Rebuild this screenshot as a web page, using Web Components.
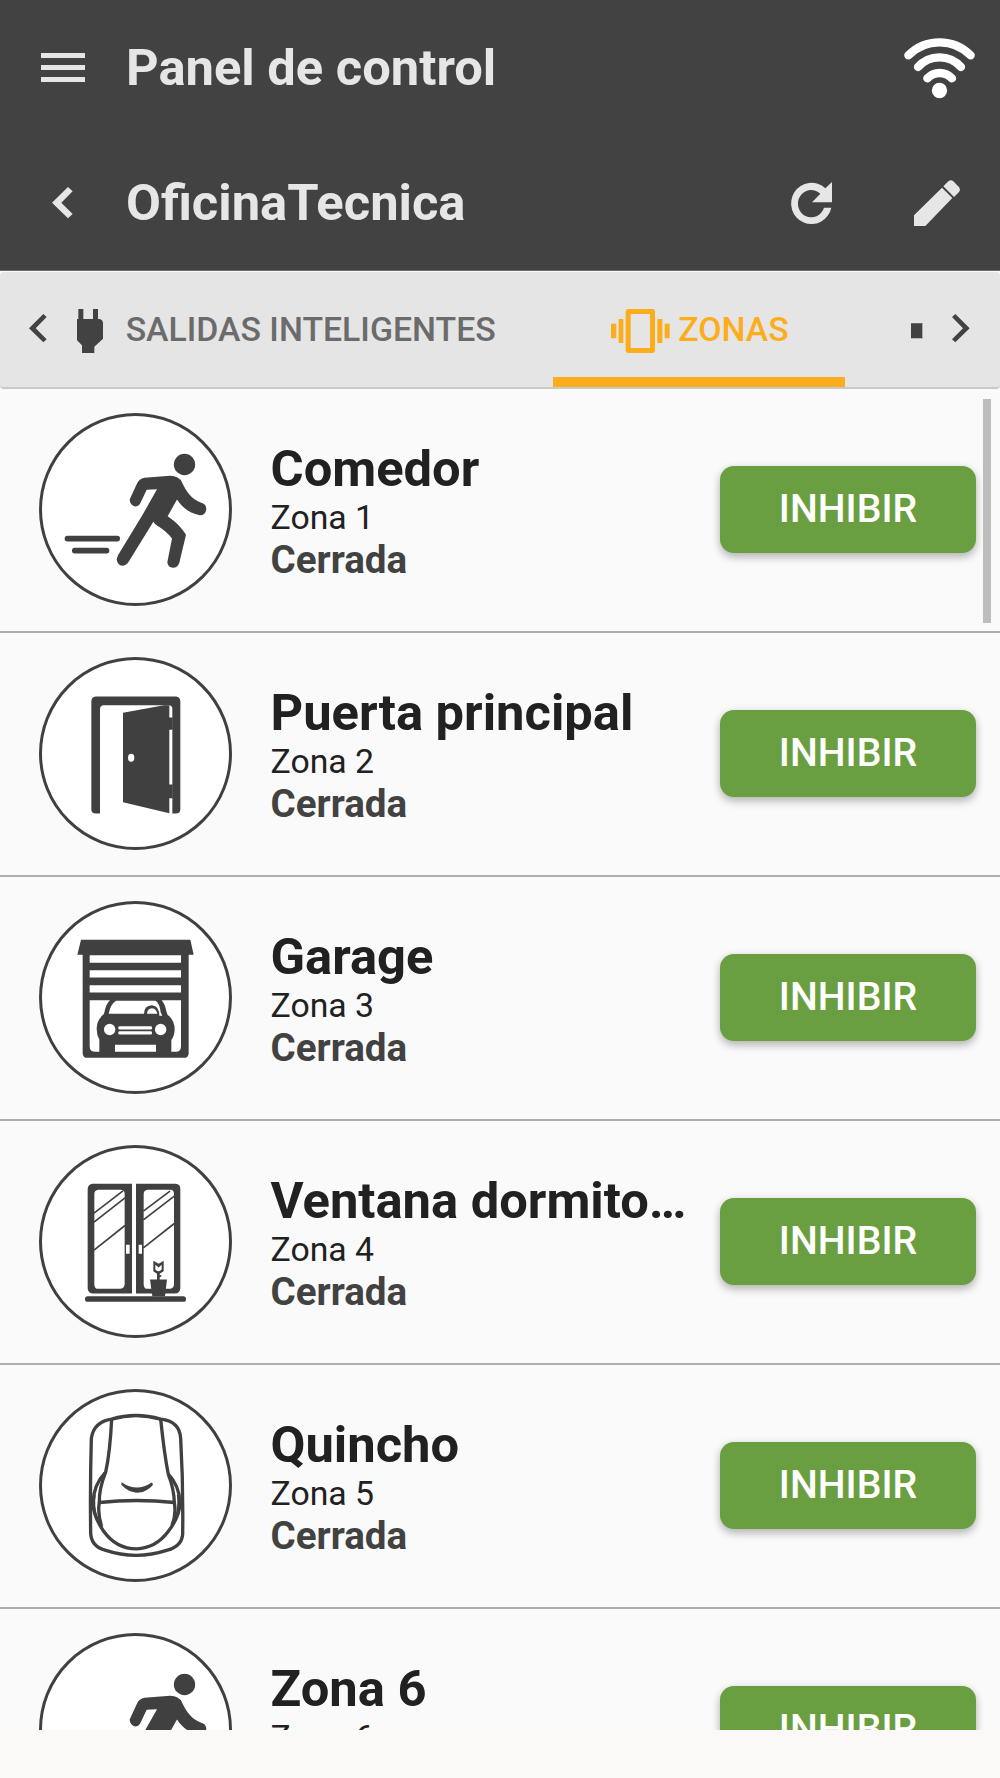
<!DOCTYPE html>
<html lang="es">
<head>
<meta charset="utf-8">
<title>Panel de control</title>
<style>
html,body{margin:0;padding:0}
body{width:1000px;height:1778px;overflow:hidden;background:#faf9f8;font-family:Roboto,"Liberation Sans",sans-serif}
</style>
</head>
<body>
<zone-app></zone-app>
<script>
const define = (name, html) => {
  const t = document.createElement('template');
  t.innerHTML = html;
  customElements.define(name, class extends HTMLElement {
    constructor() {
      super();
      this.attachShadow({mode: 'open'}).appendChild(t.content.cloneNode(true));
    }
  });
};

// Icon drawings: [viewBox, markup]. Three units make one pixel.
const runner = `
  <circle cx="463.500" cy="194" r="32"/>
  <path d="M343 234L420 228Q447 228 456 248C470 278 485 297 512 308Q529 312 529 328Q526 347 509 346C478 340 456 322 441 299L413 349Q450 374 468 405L448 489Q443 504 429 504Q413 502 412 487L426 416Q408 393 382 378Q374 373 370 366L296 486Q288 498 277 498Q262 495 260 478L264 466L336 348L381 268L350 270L333 306Q328 320 315 320Q300 316 299 299L320 253Q328 236 343 234Z"/>
  <rect x="104" y="408" width="166" height="17" rx="8"/><rect x="126" y="444" width="112" height="17" rx="8"/>`;
const ICONS = {
  menu: ['123 159 132 87', '<path d="M123 159h132v15H123zM123 195h132v15H123zM123 231h132v15H123z"/>'],
  back: ['156 562 62 94', '<path d="M204 562L156 609L204 656L218 643L184 609L218 575Z"/>'],
  wifi: ['492 113 213 181', '<g fill="none" stroke="currentColor" stroke-width="25" stroke-linecap="round"><path d="M505 165A131.600 131.600 0 0 1 692 165M534 200A86 86 0 0 1 663 200M562 234A50.800 50.800 0 0 1 636 234"/></g><circle cx="598.500" cy="270.500" r="23"/>'],
  refresh: ['153 544 123 127', '<path d="M256 563L276 544V605H216L241 579A40 41 0 1 0 252 621H274A61 62 0 1 1 256 563Z"/>'],
  edit: ['522 540 138 138', '<path d="M606 563L637 594L556 678H522V646ZM610 559L625 544Q632 537 640 544L656 560Q663 568 657 576L642 591Z"/>'],
  prev: ['88 163 53 85', '<path d="M131 163L88 205.500L131 248L141 239L108 205.500L141 172Z"/>'],
  next: ['1360 163 53 85', '<path d="M1370 163L1413 205.500L1370 248L1360 239L1393 205.500L1360 172Z"/>'],
  plug: ['231 147 78 132', '<path d="M235 147h15v30h29v-30h15v30h4Q309 179 309 190V236L283 260V279H246V256L231 241V177h4z"/>'],
  zones: ['334 147 176 132', '<path fill-rule="evenodd" d="M386 147H458Q466 147 466 155V270Q466 279 458 279H386Q378 279 378 270V155Q378 147 386 147ZM393 162V264H451V162ZM334 191h16v44h-16zM357 177h14v72h-14zM473 177h15v72h-15zM495 191h15v44h-15z"/>'],
  square: ['1235 190 34 47', '<path d="M1235 191L1266 190.500L1269 189V237L1266 235.500H1235Z"/>'],
  runner: ['27 39.500 579 579', runner],
  door: ['27 36.500 579 579', `
    <path d="M184 170Q184 155 200 155H435Q451 155 451 170V493Q451 506 437 506H427V192Q427 181 416 181H222Q210 181 210 193V506H198Q184 506 184 493Z"/>
    <path fill-rule="evenodd" d="M279 204L402 181H418V505L279 472ZM294 338.500a9.500 12 0 1 0 19 0a9.500 12 0 1 0-19 0Z"/>
    <path d="M417 218h11v37h-11zM417 419h11v41h-11z"/>`],
  garage: ['27 33.500 579 579', `
    <path fill-rule="evenodd" d="M153 150H481L491 195H476V490Q476 504 461 504H173Q158 504 158 490V195H142ZM179 196H453V219H179ZM179 241H453V263H179ZM179 286H453V308H179ZM179 331V469Q179 486 196 486H208V449Q200 436 200 417Q200 394 216 378Q223 375 224 364Q228 342 240 331ZM395 331Q405 342 409 364Q411 376 419 380Q434 396 434 418Q434 437 424 450V486H438Q453 485 453 469V331ZM255 465V486H378V465Z"/>
    <path fill="#fff" d="M236 372Q241 344 258 333H377Q389 341 392 367L397 378H388Q388 348 366 346Q342 347 342 372ZM351 372Q352 356 366 355Q380 357 382 372Z"/>
    <circle cx="239" cy="419" r="17" fill="#fff"/><circle cx="392" cy="419" r="17" fill="#fff"/>
    <rect x="265" y="409" width="101" height="10" rx="4" fill="#fff"/><rect x="265" y="424" width="101" height="10" rx="4" fill="#fff"/>`],
  window: ['27 30.500 579 579', `
    <path fill-rule="evenodd" d="M188 147H306V476H190Q173 475 173 460V162Q174 148 188 147ZM205 165Q193 166 193 178V448Q193 462 205 462H271Q284 461 284 447V178Q284 166 273 165ZM288 330V357H299V330ZM318 147H437Q451 148 451 162V460Q451 475 434 476H318ZM353 165Q341 166 341 178V448Q341 462 353 462H421Q432 460 432 447V178Q432 165 421 165ZM326 330V357H336V330Z"/>
    <path fill="none" stroke="currentColor" stroke-width="5" d="M192 235L279 168M192 262L285 189M192 346L285 272M340 229L420 169M340 255L433 184M340 339L433 266"/>
    <rect x="165" y="484" width="303" height="17" rx="8"/>
    <path fill-rule="evenodd" d="M360 434H381V417L370 409V378L386 387L401 378V409L389 417V420L396 423L389 428V434H411L405 484H367ZM376 390V404Q385 415 395 404V390L386 398Z"/>`],
  sensor: ['27 33.500 579 579', `
    <g fill="none" stroke="currentColor" stroke-width="10" stroke-linejoin="round">
    <path d="M245 124Q317 102 392 124Q449 130 452 182Q460 320 458 468Q456 505 412 517Q318 548 225 517Q184 506 182 466Q180 320 184 182Q191 132 245 124Z"/>
    <path d="M245 124Q240 225 227 283C211 323 207 347 208 374Q320 362 433 374Q432 333 415 290Q403 230 392 124"/>
    <path d="M225 285Q190 321 189 377Q190 416 221 460Q259 513 320 513Q377 511 414 462Q450 415 450 374Q448 324 415 289"/>
    <path d="M208 374Q202 405 215 447M433 374Q439 411 426 443"/>
    <path stroke-width="7" d="M194 350Q188 385 200 420M444 350Q449 385 438 420"/></g>
    <path d="M275 313Q320 345 365 314Q371 317 368 322C341 351 304 353 274 321Z"/>`]
};
customElements.define('ui-icon', class extends HTMLElement {
  connectedCallback() {
    if (this.shadowRoot) return;
    const [box, art] = ICONS[this.getAttribute('name')];
    const [, , w, h] = box.split(' ').map(Number);
    this.attachShadow({mode: 'open'}).innerHTML =
      `<style>:host{display:block;flex:none}svg{display:block;overflow:visible}</style>
       <svg viewBox="${box}" width="${w / 3}" height="${h / 3}" fill="currentColor">${art}</svg>`;
  }
});

customElements.define('zone-badge', class extends HTMLElement {
  connectedCallback() {
    if (this.shadowRoot) return;
    this.attachShadow({mode: 'open'}).innerHTML =
      `<style>:host{display:block;box-sizing:border-box;width:193px;height:193px;border-radius:50%;border:3px solid #404040;background:#fff;color:#404040;flex:none}
       ui-icon{margin:-3px}</style><ui-icon name="${this.getAttribute('icon')}"></ui-icon>`;
  }
});

define('top-bar', `<style>
  :host{display:flex;align-items:center;height:135px;box-sizing:border-box;background:#424242;color:#e6e6e6}
  .lead{width:126px;box-sizing:border-box;padding-left:var(--lead,41px);flex:none}
  h1{margin:0;flex:1;font-size:50.700px;line-height:60px;font-weight:700;white-space:nowrap}
  .end{display:flex;align-items:center;gap:82px;padding:var(--drop,0) var(--end,40px) 0 0}
</style><div class="lead"><slot name="lead"></slot></div><h1><slot></slot></h1><div class="end"><slot name="end"></slot></div>`);

define('zone-tab', `<style>
  :host{display:flex;align-items:center;box-sizing:border-box;height:115px;padding-top:3px;font-size:33.800px;line-height:40px;font-weight:500;color:#6b6b6b;white-space:nowrap;flex:none}
  :host([active]){color:#fcad1c;border-bottom:10px solid #fcad1c;padding-top:13px}
  .t{margin-top:-2px}
</style><slot name="icon"></slot><span class="t"><slot></slot></span>`);

define('tab-strip', `<style>
  :host{display:block;background:#fafafa;height:119px;box-sizing:border-box;border-top:1px solid #6e6e6e;padding-top:1px}
  .bar{display:flex;align-items:center;box-sizing:border-box;height:117px;background:#e5e5e5;border-bottom:2px solid #c9c9c9;border-radius:4px;color:#424242}
  .prev{padding:0 30px 2px 29px}
  .outs{width:476px;gap:23px}
  .zones{width:292px;box-sizing:border-box;padding-left:58.500px;gap:8.500px}
  .dark{color:#424242}
  .more{padding:3px 0 0 66.500px}
  .next{padding:0 0 2px 30px}
</style>
<div class="bar">
  <ui-icon class="prev" name="prev"></ui-icon>
  <zone-tab class="outs"><ui-icon class="dark" slot="icon" name="plug"></ui-icon>SALIDAS INTELIGENTES</zone-tab>
  <zone-tab class="zones" active><ui-icon slot="icon" name="zones"></ui-icon>ZONAS</zone-tab>
  <ui-icon class="more" name="square"></ui-icon>
  <ui-icon class="next" name="next"></ui-icon>
</div>`);

define('action-button', `<style>
  :host{display:block;flex:none}
  button{display:block;width:256px;height:87px;border:0;border-radius:14px;padding:0 0 2px;background:#6a9f41;color:#fff;font:500 39.200px/44px Roboto,"Liberation Sans",sans-serif;box-shadow:0 5px 8px rgba(0,0,0,.2),0 1px 8px rgba(0,0,0,.12)}
</style><button><slot></slot></button>`);

define('zone-row', `<style>
  :host{display:flex;align-items:center;box-sizing:border-box;height:244px;padding:0 24px 1px 39px;border-bottom:2px solid #acacac;background:#fafafa}
  .txt{flex:1;min-width:0;padding:2px 0 0 38.500px;white-space:nowrap}
  .name{font-size:50.700px;line-height:54px;font-weight:700;color:#212121}
  .zone{font-size:33.800px;line-height:44px;color:#212121}
  .state{font-size:38.600px;line-height:40px;font-weight:700;color:#424242}
</style>
<slot name="badge"></slot>
<div class="txt"><div class="name"><slot name="name"></slot></div><div class="zone"><slot name="zone"></slot></div><div class="state"><slot name="state"></slot></div></div>
<action-button>INHIBIR</action-button>`);

customElements.define('zone-list', class extends HTMLElement {
  connectedCallback() {
    if (this.shadowRoot) return;
    const zones = [['runner', 'Comedor'], ['door', 'Puerta principal'], ['garage', 'Garage'],
      ['window', 'Ventana dormito…'], ['sensor', 'Quincho'], ['runner', 'Zona 6']];
    this.attachShadow({mode: 'open'}).innerHTML = `<style>
      :host{display:block;position:relative;height:1341px;overflow:hidden;background:#fafafa}
      .thumb{position:absolute;right:9px;top:10px;width:8px;height:224px;background:#bdbdbd}
      </style>` + zones.map(([icon, name], i) => `<zone-row><zone-badge slot="badge" icon="${icon}"></zone-badge>
        <span slot="name">${name}</span><span slot="zone">Zona ${i + 1}</span><span slot="state">Cerrada</span></zone-row>`).join('') +
      '<div class="thumb"></div>';
  }
});

define('zone-app', `<style>
  :host{display:block;width:1000px}
  .net{--lead:41px;--end:25px;--drop:1px}
  .site{--lead:52px;padding-top:1px}
  .white{color:#fff}
</style>
<top-bar class="net"><ui-icon slot="lead" name="menu"></ui-icon>Panel de control<ui-icon class="white" slot="end" name="wifi"></ui-icon></top-bar>
<top-bar class="site"><ui-icon slot="lead" name="back"></ui-icon>OficinaTecnica<ui-icon slot="end" name="refresh"></ui-icon><ui-icon slot="end" name="edit"></ui-icon></top-bar>
<tab-strip></tab-strip>
<zone-list></zone-list>`);
</script>
</body>
</html>
